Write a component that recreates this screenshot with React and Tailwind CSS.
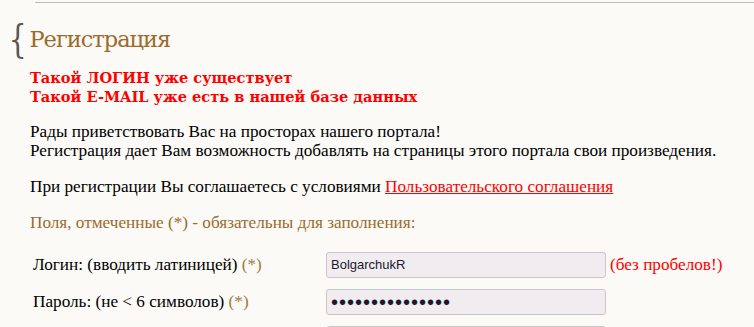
function Field({ label, value, type = "text", note }) {
  return (
    <div className="flex items-center h-[37px]">
      <div className="w-[296px] pl-[3px] text-[17.2px] text-black">
        {label} {label && <span className="text-[#a07a3c]">(*)</span>}
      </div>
      <input
        type={type}
        defaultValue={value}
        className={
          type === "password"
            ? "w-[280px] h-[26px] rounded-[3px] border border-[#c9c6c9] bg-[#f0ecf0] px-[4px] text-[#1a1a2e] outline-none font-['Liberation_Sans'] text-[20px] tracking-[1px]"
            : "w-[280px] h-[26px] rounded-[3px] border border-[#c9c6c9] bg-[#f0ecf0] px-[4px] text-[#1a1a2e] outline-none font-['Liberation_Sans'] text-[13px]"
        }
      />
      {note && <span className="ml-[4px] text-[17.2px] text-[#ff0000]">{note}</span>}
    </div>
  );
}

export default function App() {
  return (
    <div className="w-[754px] h-[327px] overflow-hidden bg-[#fbfaf6] font-['Liberation_Serif','Times_New_Roman',serif]">
      <div className="ml-[35px] pt-[2px]">
        <div className="h-px bg-[#bdbbbb]" />
      </div>

      <div className="flex items-start mt-[19px] ml-[5px]">
        <span className="inline-block scale-x-70 -mt-[1px] text-[40px] leading-[34px] text-[#555] font-['DejaVu_Serif',Georgia,serif]">
          {"{"}
        </span>
        <h1 className="-ml-[1px] text-[22.5px] leading-[34px] tracking-[-1px] text-[#9c6a2d] font-['DejaVu_Serif',Georgia,serif]">
          Регистрация
        </h1>
      </div>

      <div className="pl-[30px] pr-[10px]">
        <div className="mt-[12px] text-[14.6px] leading-[19px] font-bold text-[#ff0000] font-['DejaVu_Serif',Georgia,serif]">
          <div>Такой ЛОГИН уже существует</div>
          <div>Такой E-MAIL уже есть в нашей базе данных</div>
        </div>

        <div className="mt-[16px] text-[17.2px] leading-[19px] text-black">
          <div>Рады приветствовать Вас на просторах нашего портала!</div>
          <div>Регистрация дает Вам возможность добавлять на страницы этого портала свои произведения.</div>
        </div>

        <div className="mt-[17px] text-[17.2px] leading-[19px] text-black">
          При регистрации Вы соглашаетесь с условиями{" "}
          <a href="#" className="text-[#ff0000] underline">
            Пользовательского соглашения
          </a>
        </div>

        <div className="mt-[17px] text-[17.2px] leading-[19px] text-[#9c6a2d]">
          Поля, отмеченные (*) - обязательны для заполнения:
        </div>

        <div className="mt-[14px]">
          <Field label="Логин: (вводить латиницей)" value="BolgarchukR" note="(без пробелов!)" />
          <Field label="Пароль: (не < 6 символов)" value="abcdefghijklmno" type="password" />
          <Field label="" value="" />
        </div>
      </div>
    </div>
  );
}
